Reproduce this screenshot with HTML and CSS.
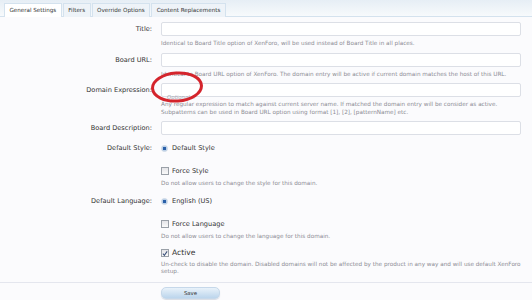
FILE: index.html
```html
<!DOCTYPE html>
<html>
<head>
<meta charset="utf-8">
<link rel="stylesheet" href="styles.css">
</head>
<body>
<div class="page">
  <div class="tabbar">
    <div class="tab active">General Settings</div>
    <div class="tab">Filters</div>
    <div class="tab">Override Options</div>
    <div class="tab">Content Replacements</div>
  </div>
  <form class="form">
    <div class="row r-title">
      <label class="lbl">Title:</label>
      <div class="ctl">
        <div class="input"></div>
        <p class="hint">Identical to Board Title option of XenForo, will be used instead of Board Title in all places.</p>
      </div>
    </div>
    <div class="row r-url">
      <label class="lbl">Board URL:</label>
      <div class="ctl">
        <div class="input"></div>
        <p class="hint">Identical to Board URL option of XenForo. The domain entry will be active if current domain matches the host of this URL.</p>
      </div>
    </div>
    <div class="row r-domain">
      <label class="lbl">Domain Expression:</label>
      <div class="ctl">
        <div class="input"><span class="ph">Optional...</span></div>
        <p class="hint">Any regular expression to match against current server name. If matched the domain entry will be consider as active.<br>Subpatterns can be used in Board URL option using format [1], [2], [patternName] etc.</p>
        <svg class="circle" width="60" height="34" viewBox="0 0 60 34"><ellipse cx="26" cy="16" rx="24.5" ry="14" fill="none" stroke="#d4242c" stroke-width="3" transform="rotate(-4 26 16)"/></svg>
      </div>
    </div>
    <div class="row r-desc">
      <label class="lbl">Board Description:</label>
      <div class="ctl"><div class="input"></div></div>
    </div>
    <div class="row r-style">
      <label class="lbl short">Default Style:</label>
      <div class="ctl">
        <div class="opt"><span class="radio"></span>Default Style</div>
      </div>
    </div>
    <div class="row r-fstyle">
      <div></div>
      <div class="ctl">
        <div class="opt"><span class="check"></span>Force Style</div>
        <p class="hint">Do not allow users to change the style for this domain.</p>
      </div>
    </div>
    <div class="row r-lang">
      <label class="lbl short">Default Language:</label>
      <div class="ctl">
        <div class="opt"><span class="radio"></span>English (US)</div>
      </div>
    </div>
    <div class="row r-flang">
      <div></div>
      <div class="ctl">
        <div class="opt"><span class="check"></span>Force Language</div>
        <p class="hint">Do not allow users to change the language for this domain.</p>
      </div>
    </div>
    <div class="row r-active">
      <div></div>
      <div class="ctl">
        <div class="opt big"><span class="check on"><svg width="7" height="7" viewBox="0 0 7 7"><path d="M1 3.6 L2.8 5.6 L6 1" fill="none" stroke="#3a4f7a" stroke-width="1.2"/></svg></span>Active</div>
        <p class="hint tight">Un-check to disable the domain. Disabled domains will not be affected by the product in any way and will use default XenForo<br>setup.</p>
      </div>
    </div>
    <div class="submit">
      <div class="row">
        <div></div>
        <div class="ctl"><button type="button" class="btn">Save</button></div>
      </div>
    </div>
  </form>
</div>
</body>
</html>
```
FILE: styles.css
```css
* { box-sizing: border-box; }
html, body { margin: 0; padding: 0; }
body {
  background: #fbfbfd;
  font-family: "DejaVu Sans", Verdana, sans-serif;
  color: #333;
  width: 532px;
  height: 300px;
  overflow: hidden;
}
.page { width: 532px; }
.tabbar {
  display: flex;
  padding: 3px 0 0 4px;
  height: 17px;
  background: linear-gradient(#e6eef5, #f7fafc);
  border-bottom: 1px solid #d4e2ee;
}
.tab {
  height: 14px;
  padding: 0 4.5px;
  font-size: 5.6px;
  line-height: 13px;
  color: #333;
  background: #eef3f8;
  border: 1px solid #d4e2ee;
  border-bottom: none;
  margin-right: 1px;
  white-space: nowrap;
}
.tab.active { background: #fff; }
.form { padding-top: 5px; }
.row {
  display: grid;
  grid-template-columns: 152px 360px;
  column-gap: 9px;
}
.lbl {
  text-align: right;
  font-size: 6.6px;
  font-weight: normal;
  color: #333;
  line-height: 14px;
  white-space: nowrap;
}
.lbl.short { line-height: 10px; }
.ctl { position: relative; }
.input {
  height: 14px;
  background: #fff;
  border: 1px solid #dcdfe6;
  border-radius: 2px;
  padding-left: 5px;
}
.ph { font-size: 5.4px; color: #a8a8b2; line-height: 12px; font-style: italic; }
.hint {
  margin: 3px 0 0 0;
  font-size: 5.7px;
  line-height: 8px;
  color: #8c8c94;
  white-space: nowrap;
}
.hint.tight { line-height: 7px; }
.r-url { margin-top: 6px; }
.r-domain { margin-top: 5px; }
.r-desc { margin-top: 5px; }
.r-style { margin-top: 8px; }
.r-fstyle { margin-top: 13px; }
.r-lang { margin-top: 9px; }
.r-flang { margin-top: 13px; }
.r-active { margin-top: 8px; }
.circle { position: absolute; left: -10px; top: -12px; }
.opt {
  display: flex;
  align-items: center;
  font-size: 6.6px;
  line-height: 10px;
  height: 10px;
  color: #333;
}
.opt.big { font-size: 7.6px; }
.radio {
  width: 7px; height: 7px;
  border-radius: 50%;
  background: radial-gradient(circle, #2a5fa8 0 1.6px, #b9cfe8 2px 3.5px);
  border: 1px solid #c8d5e4;
  margin-right: 4px;
}
.check {
  width: 8px; height: 8px;
  border: 1px solid #9aa0a8;
  background: linear-gradient(#e4e4e8, #fafafa);
  margin-right: 3px;
  display: inline-flex; align-items: center; justify-content: center;
}
.submit {
  margin-top: 7px;
  border-top: 1px solid #e4e6ee;
  padding-top: 4px;
}
.btn {
  display: block;
  width: 59px;
  height: 12px;
  font-family: "DejaVu Sans", Verdana, sans-serif;
  font-size: 5.4px;
  line-height: 10px;
  color: #333;
  border: 1px solid #c6d8ea;
  border-radius: 5px;
  background: linear-gradient(#e9f2fa, #bcd5ec);
  padding: 0;
  box-shadow: 0 1px 1px #d8dce4;
}
```
